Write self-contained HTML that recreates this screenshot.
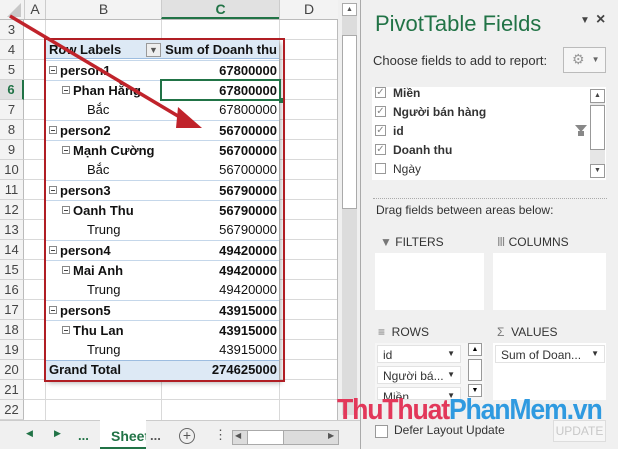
<!DOCTYPE html><html><head><meta charset="utf-8"><style>
*{margin:0;padding:0;box-sizing:border-box}
body{width:618px;height:449px;overflow:hidden;background:#fff;font-family:"Liberation Sans",sans-serif;position:relative}
.a{position:absolute}
.hd{background:#f3f3f3;color:#444;font-size:14px;text-align:center;line-height:19px}
.rn{position:absolute;left:0;width:24px;height:20px;background:#f3f3f3;border-bottom:1px solid #d4d4d4;border-right:1px solid #bbb;font-size:13px;color:#444;text-align:center;line-height:20px}
.gl{position:absolute;left:24px;width:314px;height:1px;background:#d9d9d9}
.vl{position:absolute;top:20px;width:1px;height:400px;background:#d9d9d9}
.pr{position:absolute;left:46px;width:233px;height:20px;font-size:13px;line-height:20px;color:#111;padding-left:3px}
.pr b{font-weight:bold}
.pr .v{position:absolute;right:2px;top:0}
.mi{display:inline-block;width:8px;height:8px;border:1px solid #888;position:relative;top:-1px;margin-right:3px}
.mi:after{content:"";position:absolute;left:1px;top:3px;width:4px;height:1px;background:#444}
.pn{font-size:12px;color:#333}
.cb{position:absolute;width:11px;height:11px;border:1px solid #999;background:#fff;font-size:10px;line-height:9px;text-align:center;color:#888}
</style></head><body>
<div class="a hd" style="left:0;top:0;width:338px;height:20px;border-bottom:1px solid #bbb"></div>
<div class="a" style="left:7px;top:3px;width:0;height:0;border-left:14px solid transparent;border-bottom:14px solid #c8c8c8"></div>
<div class="a hd" style="left:24px;top:0;width:21px;height:19px;border-left:1px solid #ccc">A</div>
<div class="a hd" style="left:45px;top:0;width:116px;height:19px;border-left:1px solid #ccc">B</div>
<div class="a hd" style="left:161px;top:0;width:118px;height:19px;background:#e1e1e1;color:#217346;font-weight:bold;border-left:1px solid #ccc;border-bottom:2px solid #217346">C</div>
<div class="a hd" style="left:279px;top:0;width:59px;height:19px;border-left:1px solid #ccc">D</div>
<div class="rn" style="top:20px">3</div><div class="rn" style="top:40px">4</div><div class="rn" style="top:60px">5</div>
<div class="rn" style="top:80px;background:#e1e1e1;color:#217346;font-weight:bold;border-right:2px solid #217346">6</div>
<div class="rn" style="top:100px">7</div><div class="rn" style="top:120px">8</div><div class="rn" style="top:140px">9</div><div class="rn" style="top:160px">10</div><div class="rn" style="top:180px">11</div><div class="rn" style="top:200px">12</div><div class="rn" style="top:220px">13</div><div class="rn" style="top:240px">14</div><div class="rn" style="top:260px">15</div><div class="rn" style="top:280px">16</div><div class="rn" style="top:300px">17</div><div class="rn" style="top:320px">18</div><div class="rn" style="top:340px">19</div><div class="rn" style="top:360px">20</div><div class="rn" style="top:380px">21</div><div class="rn" style="top:400px">22</div>
<div class="gl" style="top:39px"></div><div class="gl" style="top:59px"></div><div class="gl" style="top:79px"></div><div class="gl" style="top:99px"></div><div class="gl" style="top:119px"></div><div class="gl" style="top:139px"></div><div class="gl" style="top:159px"></div><div class="gl" style="top:179px"></div><div class="gl" style="top:199px"></div><div class="gl" style="top:219px"></div><div class="gl" style="top:239px"></div><div class="gl" style="top:259px"></div><div class="gl" style="top:279px"></div><div class="gl" style="top:299px"></div><div class="gl" style="top:319px"></div><div class="gl" style="top:339px"></div><div class="gl" style="top:359px"></div><div class="gl" style="top:379px"></div><div class="gl" style="top:399px"></div>
<div class="vl" style="left:45px"></div><div class="vl" style="left:161px"></div><div class="vl" style="left:279px"></div><div class="vl" style="left:337px;background:#bbb"></div>
<div class="a" style="left:46px;top:40px;width:233px;height:340px;background:#fff;box-shadow:2px 3px 5px rgba(0,0,0,.3)"></div>
<div class="a" style="left:46px;top:40px;width:233px;height:19px;background:#dde9f5;border-bottom:1px solid #9dbde0"></div>
<div class="a" style="left:46px;top:360px;width:233px;height:20px;background:#dde9f5;border-top:1px solid #9dbde0"></div>
<div class="pr" style="top:40px"><b>Row Labels</b><span class="a" style="left:100px;top:3px;width:15px;height:14px;border:1px solid #999;background:#eee;font-size:9px;line-height:12px;text-align:center;color:#555">▼</span><span class="v" style="font-weight:bold">Sum of Doanh thu</span></div>
<div class="pr" style="top:60px;border-top:1px solid #c5d7ea"><b><span class="mi"></span>person1</b><span class="v"><b>67800000</b></span></div>
<div class="pr" style="top:80px;padding-left:16px;border-top:1px solid #c5d7ea"><b><span class="mi"></span>Phan Hằng</b><span class="v"><b>67800000</b></span></div>
<div class="pr" style="top:100px;padding-left:41px">Bắc<span class="v">67800000</span></div>
<div class="pr" style="top:120px;border-top:1px solid #c5d7ea"><b><span class="mi"></span>person2</b><span class="v"><b>56700000</b></span></div>
<div class="pr" style="top:140px;padding-left:16px;border-top:1px solid #c5d7ea"><b><span class="mi"></span>Mạnh Cường</b><span class="v"><b>56700000</b></span></div>
<div class="pr" style="top:160px;padding-left:41px">Bắc<span class="v">56700000</span></div>
<div class="pr" style="top:180px;border-top:1px solid #c5d7ea"><b><span class="mi"></span>person3</b><span class="v"><b>56790000</b></span></div>
<div class="pr" style="top:200px;padding-left:16px;border-top:1px solid #c5d7ea"><b><span class="mi"></span>Oanh Thu</b><span class="v"><b>56790000</b></span></div>
<div class="pr" style="top:220px;padding-left:41px">Trung<span class="v">56790000</span></div>
<div class="pr" style="top:240px;border-top:1px solid #c5d7ea"><b><span class="mi"></span>person4</b><span class="v"><b>49420000</b></span></div>
<div class="pr" style="top:260px;padding-left:16px;border-top:1px solid #c5d7ea"><b><span class="mi"></span>Mai Anh</b><span class="v"><b>49420000</b></span></div>
<div class="pr" style="top:280px;padding-left:41px">Trung<span class="v">49420000</span></div>
<div class="pr" style="top:300px;border-top:1px solid #c5d7ea"><b><span class="mi"></span>person5</b><span class="v"><b>43915000</b></span></div>
<div class="pr" style="top:320px;padding-left:16px;border-top:1px solid #c5d7ea"><b><span class="mi"></span>Thu Lan</b><span class="v"><b>43915000</b></span></div>
<div class="pr" style="top:340px;padding-left:41px">Trung<span class="v">43915000</span></div>
<div class="pr" style="top:360px"><b>Grand Total</b><span class="v"><b>274625000</b></span></div>
<div class="a" style="left:160px;top:79px;width:121px;height:22px;border:2px solid #217346"></div>
<div class="a" style="left:279px;top:98px;width:5px;height:5px;background:#217346"></div>
<div class="a" style="left:44px;top:38px;width:241px;height:344px;border:2px solid #b01e24"></div>
<svg class="a" style="left:0;top:0" width="340" height="200"><line x1="10" y1="16" x2="188" y2="122" stroke="#c0232b" stroke-width="3.5"/><polygon points="202,128 178,107 176,128" fill="#c0232b"/></svg>
<div class="a" style="left:338px;top:0;width:22px;height:420px;background:#f0f0f0"></div>
<div class="a" style="left:342px;top:3px;width:15px;height:412px;background:#dcdcdc"></div>
<div class="a" style="left:342px;top:3px;width:15px;height:13px;background:#fff;border:1px solid #aaa;font-size:7px;text-align:center;line-height:11px;color:#555">▲</div>
<div class="a" style="left:342px;top:35px;width:15px;height:174px;background:#fff;border:1px solid #aaa"></div>
<div class="a" style="left:0;top:420px;width:360px;height:29px;background:#f0f0f0;border-top:1px solid #ccc"></div>
<div class="a" style="left:26px;top:428px;font-size:9px;color:#217346">◀</div>
<div class="a" style="left:54px;top:428px;font-size:9px;color:#217346">▶</div>
<div class="a" style="left:78px;top:428px;font-size:13px;font-weight:bold;color:#217346">...</div>
<div class="a" style="left:100px;top:420px;width:46px;height:29px;background:#fff;border-bottom:2px solid #217346;font-size:14px;font-weight:bold;color:#217346;padding:8px 0 0 11px;overflow:hidden;white-space:nowrap">Sheet</div>
<div class="a" style="left:150px;top:428px;font-size:13px;font-weight:bold;color:#555">...</div>
<div class="a" style="left:179px;top:428px;width:16px;height:16px;border:1.5px solid #666;border-radius:50%;font-size:14px;line-height:13px;text-align:center;color:#555">+</div>
<div class="a" style="left:214px;top:427px;font-size:13px;color:#555">⋮</div>
<div class="a" style="left:232px;top:430px;width:107px;height:15px;background:#dcdcdc;border:1px solid #aaa"></div>
<div class="a" style="left:247px;top:431px;width:37px;height:13px;background:#fff;border-left:1px solid #aaa;border-right:1px solid #aaa"></div>
<div class="a" style="left:235px;top:431px;font-size:8px;color:#555">◀</div>
<div class="a" style="left:328px;top:431px;font-size:8px;color:#555">▶</div>
<div class="a" style="left:360px;top:0;width:258px;height:449px;background:#f0f0f0;border-left:1px solid #aaa"></div>
<div class="a" style="left:375px;top:11px;font-size:22px;color:#217346">PivotTable Fields</div>
<div class="a" style="left:580px;top:15px;font-size:10px;color:#444">▼</div>
<div class="a" style="left:596px;top:11px;font-size:16px;font-weight:bold;color:#444">×</div>
<div class="a pn" style="left:373px;top:53px;font-size:13px">Choose fields to add to report:</div>
<div class="a" style="left:563px;top:47px;width:43px;height:26px;border:1px solid #bbb;background:#f6f6f6;font-size:14px;color:#999;padding:3px 0 0 8px">⚙<span style="font-size:8px;margin-left:7px;color:#666;position:relative;top:-2px">▼</span></div>
<div class="a" style="left:372px;top:87px;width:234px;height:93px;background:#fff"></div>
<div class="cb" style="left:375px;top:87px">✓</div><div class="a pn" style="left:393px;top:86px;font-weight:bold">Miền</div>
<div class="cb" style="left:375px;top:106px">✓</div><div class="a pn" style="left:393px;top:105px;font-weight:bold">Người bán hàng</div>
<div class="cb" style="left:375px;top:125px">✓</div><div class="a pn" style="left:393px;top:124px;font-weight:bold">id</div>
<div class="a" style="left:575px;top:125px;width:0;height:0;border-left:6px solid transparent;border-right:6px solid transparent;border-top:7px solid #888"></div>
<div class="a" style="left:578px;top:131px;width:6px;height:5px;background:#888"></div>
<div class="cb" style="left:375px;top:144px">✓</div><div class="a pn" style="left:393px;top:143px;font-weight:bold">Doanh thu</div>
<div class="cb" style="left:375px;top:163px"></div><div class="a pn" style="left:393px;top:162px">Ngày</div>
<div class="a" style="left:590px;top:89px;width:15px;height:89px;background:#e6e6e6"></div>
<div class="a" style="left:590px;top:89px;width:15px;height:14px;background:#fff;border:1px solid #999;font-size:7px;text-align:center;line-height:12px;color:#444">▲</div>
<div class="a" style="left:590px;top:105px;width:15px;height:45px;background:#fff;border:1px solid #999"></div>
<div class="a" style="left:590px;top:164px;width:15px;height:14px;background:#fff;border:1px solid #999;font-size:7px;text-align:center;line-height:12px;color:#444">▼</div>
<div class="a" style="left:373px;top:198px;width:234px;border-top:1px dotted #aaa"></div>
<div class="a pn" style="left:376px;top:203px">Drag fields between areas below:</div>
<div class="a pn" style="left:380px;top:235px;color:#666"><span style="color:#777">▼</span> <span style="color:#333">FILTERS</span></div>
<div class="a pn" style="left:497px;top:235px;color:#333"><span style="color:#888">Ⅲ</span> COLUMNS</div>
<div class="a" style="left:375px;top:253px;width:109px;height:57px;background:#fff"></div>
<div class="a" style="left:493px;top:253px;width:113px;height:57px;background:#fff"></div>
<div class="a pn" style="left:378px;top:325px;color:#333"><span style="color:#777">≡</span>&nbsp; ROWS</div>
<div class="a pn" style="left:497px;top:325px;color:#333"><span style="color:#777">Σ</span>&nbsp; VALUES</div>
<div class="a" style="left:375px;top:343px;width:109px;height:57px;background:#f6f6f6"></div>
<div class="a pn" style="left:377px;top:345px;width:84px;height:18px;background:#fff;border:1px solid #e2e2e2;padding:2px 5px">id<span class="a" style="right:5px;top:3px;font-size:8px">▼</span></div>
<div class="a pn" style="left:377px;top:366px;width:84px;height:18px;background:#fff;border:1px solid #e2e2e2;padding:2px 5px">Người bá...<span class="a" style="right:5px;top:3px;font-size:8px">▼</span></div>
<div class="a pn" style="left:377px;top:387px;width:84px;height:13px;background:#fff;border:1px solid #e2e2e2;padding:2px 5px;overflow:hidden">Miền<span class="a" style="right:5px;top:3px;font-size:8px">▼</span></div>
<div class="a" style="left:468px;top:343px;width:14px;height:13px;background:#fff;border:1px solid #999;font-size:7px;text-align:center;line-height:11px">▲</div>
<div class="a" style="left:468px;top:359px;width:14px;height:22px;background:#fff;border:1px solid #999"></div>
<div class="a" style="left:468px;top:384px;width:14px;height:13px;background:#fff;border:1px solid #999;font-size:7px;text-align:center;line-height:11px">▼</div>
<div class="a" style="left:493px;top:343px;width:113px;height:57px;background:#fff"></div>
<div class="a pn" style="left:495px;top:345px;width:110px;height:18px;background:#fff;border:1px solid #e2e2e2;padding:2px 5px">Sum of Doan...<span class="a" style="right:5px;top:3px;font-size:8px">▼</span></div>
<div class="cb" style="left:375px;top:425px;width:13px;height:13px"></div>
<div class="a pn" style="left:394px;top:423px;color:#333">Defer Layout Update</div>
<div class="a" style="left:553px;top:420px;width:53px;height:22px;border:1px solid #ddd;background:#f6f6f6;font-size:12px;color:#c8c8c8;text-align:center;line-height:20px">UPDATE</div>
<div class="a" style="left:337px;top:394px;font-size:29px;font-weight:bold;letter-spacing:-1.3px;line-height:32px;transform:scaleX(.92);transform-origin:left"><span style="color:#e2385a">ThuThuat</span><span style="color:#2f9ae0">PhanMem.vn</span></div>
</body></html>
